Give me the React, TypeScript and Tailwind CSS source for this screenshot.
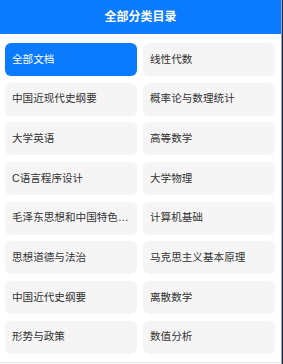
const categories = [
  '全部文档',
  '线性代数',
  '中国近现代史纲要',
  '概率论与数理统计',
  '大学英语',
  '高等数学',
  'C语言程序设计',
  '大学物理',
  '毛泽东思想和中国特色社会主义理论体系概论',
  '计算机基础',
  '思想道德与法治',
  '马克思主义基本原理',
  '中国近代史纲要',
  '离散数学',
  '形势与政策',
  '数值分析',
];

export default function App() {
  const active = 0;
  return (
    <div className="flex h-[364px] w-[283px] bg-[#1b2a4a]" style={{ fontFamily: '"Liberation Sans", "Noto Sans CJK SC", sans-serif' }}>
      <div className="flex h-full w-[282px] flex-col border-r border-gray-400 bg-white">
        {/* Header */}
        <div className="flex h-[34px] shrink-0 items-center justify-center bg-[#0a7bff]">
          <h1 className="text-[12px] font-bold text-white">全部分类目录</h1>
        </div>

        <div className="grid grid-cols-[132px_132px] gap-x-[6px] gap-y-[6.7px] px-[5px] pt-[9px]">
          {categories.map((name, i) => (
            <div
              key={name}
              className={`flex h-[33px] min-w-0 items-center rounded-[6px] pl-[7px] pr-[6px] text-[10.6px] ${
                i === active ? 'bg-[#0a7bff] text-white' : 'bg-[#f5f5f5] text-[#333]'
              }`}
            >
              <span className="truncate">{name}</span>
            </div>
          ))}
        </div>

        <div className="mt-auto mb-[1px] h-px bg-gray-200" />
      </div>
    </div>
  );
}
